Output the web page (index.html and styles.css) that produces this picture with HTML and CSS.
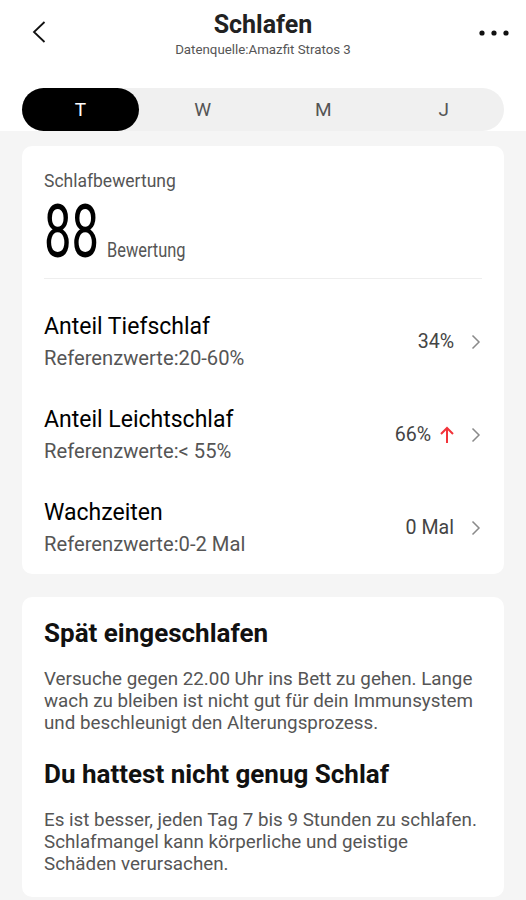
FILE: index.html
```html
<!DOCTYPE html>
<html lang="de">
<head>
<meta charset="utf-8">
<link rel="stylesheet" href="styles.css">
</head>
<body>
<div class="page">
  <header class="top">
    <div class="navbar">
      <svg class="back" width="14" height="22" viewBox="0 0 14 22"><path d="M12.5 1 L2 11 L12.5 21" fill="none" stroke="#111" stroke-width="1.8"/></svg>
      <div class="titles">
        <div class="title">Schlafen</div>
        <div class="subtitle">Datenquelle:Amazfit Stratos 3</div>
      </div>
      <svg class="more" width="30" height="6" viewBox="0 0 30 6"><circle cx="3" cy="3" r="2.6" fill="#111"/><circle cx="15" cy="3" r="2.6" fill="#111"/><circle cx="27" cy="3" r="2.6" fill="#111"/></svg>
    </div>
    <div class="segments">
      <div class="seg active">T</div>
      <div class="seg">W</div>
      <div class="seg">M</div>
      <div class="seg">J</div>
    </div>
  </header>
  <main class="content">
    <section class="card score-card">
      <div class="score-label">Schlafbewertung</div>
      <div class="score"><span class="score-num">88</span><span class="score-unit">Bewertung</span></div>
      <div class="divider"></div>
      <div class="rows">
        <div class="row">
          <div class="row-text">
            <div class="row-title">Anteil Tiefschlaf</div>
            <div class="row-sub">Referenzwerte:20-60%</div>
          </div>
          <div class="row-value">34%<svg class="chev" width="10" height="16" viewBox="0 0 10 16"><path d="M1.5 1.5 L8 8 L1.5 14.5" fill="none" stroke="#8a8a8a" stroke-width="1.5"/></svg></div>
        </div>
        <div class="row">
          <div class="row-text">
            <div class="row-title">Anteil Leichtschlaf</div>
            <div class="row-sub">Referenzwerte:&lt; 55%</div>
          </div>
          <div class="row-value">66%<svg class="up" width="14" height="18" viewBox="0 0 14 18"><path d="M7 17 V2 M1 8 L7 2 L13 8" fill="none" stroke="#f2333a" stroke-width="2"/></svg><svg class="chev" width="10" height="16" viewBox="0 0 10 16"><path d="M1.5 1.5 L8 8 L1.5 14.5" fill="none" stroke="#8a8a8a" stroke-width="1.5"/></svg></div>
        </div>
        <div class="row">
          <div class="row-text">
            <div class="row-title">Wachzeiten</div>
            <div class="row-sub">Referenzwerte:0-2 Mal</div>
          </div>
          <div class="row-value">0 Mal<svg class="chev" width="10" height="16" viewBox="0 0 10 16"><path d="M1.5 1.5 L8 8 L1.5 14.5" fill="none" stroke="#8a8a8a" stroke-width="1.5"/></svg></div>
        </div>
      </div>
    </section>
    <section class="card tips">
      <h2 class="tip-title">Spät eingeschlafen</h2>
      <p class="tip-text">Versuche gegen 22.00 Uhr ins Bett zu gehen. Lange wach zu bleiben ist nicht gut für dein Immunsystem und beschleunigt den Alterungsprozess.</p>
      <h2 class="tip-title second">Du hattest nicht genug Schlaf</h2>
      <p class="tip-text">Es ist besser, jeden Tag 7 bis 9 Stunden zu schlafen. Schlafmangel kann körperliche und geistige Schäden verursachen.</p>
    </section>
  </main>
</div>
</body>
</html>
```
FILE: styles.css
```css
* { box-sizing: border-box; }
html, body { margin: 0; padding: 0; }
body {
  font-family: Roboto, "Noto Sans", sans-serif;
  background: #f5f5f5;
  color: #111;
  width: 526px;
  height: 900px;
  overflow: hidden;
}
.page { display: flex; flex-direction: column; }
.top {
  background: #fff;
  padding: 0 22px;
  height: 131px;
  display: flex;
  flex-direction: column;
}
.navbar {
  height: 88px;
  display: flex;
  align-items: flex-start;
  justify-content: space-between;
  position: relative;
}
.back { margin-top: 21px; margin-left: 10px; }
.more { margin-top: 30px; margin-right: -5px; }
.titles {
  position: absolute;
  left: 0; right: 0; top: 8px;
  text-align: center;
}
.title { font-size: 25px; font-weight: 700; color: #222; line-height: 34px; }
.subtitle { font-size: 13.3px; color: #555; line-height: 18px; margin-top: -1px; }
.segments {
  height: 43px;
  background: #f0f0f0;
  border-radius: 22px;
  display: grid;
  grid-template-columns: repeat(4, 1fr);
}
.seg {
  display: flex; align-items: center; justify-content: center;
  font-size: 19px; color: #555;
  border-radius: 22px;
}
.seg.active { background: #000; color: #fff; width: 117px; }
.content { padding: 15px 22px 0; display: flex; flex-direction: column; gap: 23px; }
.card { background: #fff; border-radius: 10px; padding: 0 22px; }
.score-card { padding-top: 23px; }
.score-label { font-size: 17.5px; color: #555; line-height: 24px; }
.score { display: flex; align-items: baseline; margin-top: 6px; height: 66px; }
.score-num {
  display: inline-block;
  font-size: 74px; line-height: 66px; color: #000;
  transform: scaleX(0.66);
  transform-origin: left center;
  margin-right: -28px;
}
.score-unit {
  display: inline-block;
  font-size: 21px; color: #555;
  transform: scaleX(0.78);
  transform-origin: left center;
  margin-left: 8px;
}
.divider { height: 1px; background: #eeeeee; margin-top: 13px; }
.rows { padding-top: 16px; display: flex; flex-direction: column; }
.row {
  height: 93px;
  display: flex; align-items: center; justify-content: space-between;
}
.row-title { font-size: 23px; color: #000; line-height: 30px; }
.row-sub { font-size: 20.2px; color: #555; line-height: 28px; margin-top: 2px; }
.row-value {
  display: flex; align-items: center;
  font-size: 19.6px; color: #444;
}
.up { margin-left: 9px; }
.chev { margin-left: 17px; margin-right: 1px; }
.tips { padding-top: 20px; padding-bottom: 22px; }
.tip-title { font-size: 26px; font-weight: 700; margin: 0; line-height: 32px; color: #111; }
.tip-title.second { margin-top: 24px; }
.tip-text { font-size: 18.8px; color: #555; line-height: 22px; margin: 19px 0 0; }
```
